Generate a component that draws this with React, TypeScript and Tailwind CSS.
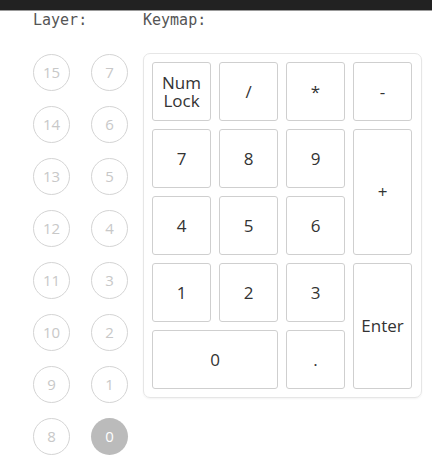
const layers = [15, 14, 13, 12, 11, 10, 9, 8, 7, 6, 5, 4, 3, 2, 1, 0];
const activeLayer = 0;

interface Key {
  label: string;
  cls?: string;
}

const keys: Key[] = [
  { label: 'Num\nLock' },
  { label: '/' },
  { label: '*' },
  { label: '-' },
  { label: '7' },
  { label: '8' },
  { label: '9' },
  { label: '+', cls: 'row-span-2' },
  { label: '4' },
  { label: '5' },
  { label: '6' },
  { label: '1' },
  { label: '2' },
  { label: '3' },
  { label: 'Enter', cls: 'row-span-2' },
  { label: '0', cls: 'col-span-2' },
  { label: '.' },
];

const App = () => {
  return (
    <div className="w-[432px] h-[464px] bg-white overflow-hidden">
      <div className="h-[11px] bg-[#222] border-b border-[#999]" />
      <div className="flex gap-[15px] pl-[33px]">
        {/* layer picker */}
        <div className="w-[95px]">
          <div className="h-[16px] mt-[1px] text-[15px] leading-[16px] text-[#555] font-['DejaVu_Sans_Mono',monospace]">
            Layer:
          </div>
          <div className="grid grid-flow-col grid-rows-8 grid-cols-2 gap-x-[21px] gap-y-[15px] mt-[26px]">
            {layers.map((n) => (
              <div
                key={n}
                className={
                  n === activeLayer
                    ? 'w-[37px] h-[37px] rounded-full bg-[#bbb] text-white flex items-center justify-center text-[15px] font-["Open_Sans",sans-serif]'
                    : 'w-[37px] h-[37px] rounded-full border border-[#d4d4d4] text-[#c8c8c8] flex items-center justify-center text-[15px] font-["Open_Sans",sans-serif]'
                }
              >
                {n}
              </div>
            ))}
          </div>
        </div>

        {/* keymap */}
        <div>
          <div className="h-[16px] mt-[1px] text-[15px] leading-[16px] text-[#555] font-['DejaVu_Sans_Mono',monospace]">
            Keymap:
          </div>
          <div className="mt-[25px] w-[279px] rounded-[7px] border border-[#e6e6e6] p-[8px] shadow-[0_1px_2px_rgba(0,0,0,0.05)]">
            <div className="grid grid-cols-[repeat(4,59px)] grid-rows-[repeat(5,59px)] gap-[8px]">
              {keys.map((k) => (
                <div
                  key={k.label}
                  className={`${k.cls ?? ''} rounded-[3px] border border-[#cfcfcf] flex items-center justify-center text-center whitespace-pre-line text-[17px] leading-[18px] text-[#333] font-['Open_Sans',sans-serif]`}
                >
                  {k.label}
                </div>
              ))}
            </div>
          </div>
        </div>
      </div>
    </div>
  );
};

export default App;
